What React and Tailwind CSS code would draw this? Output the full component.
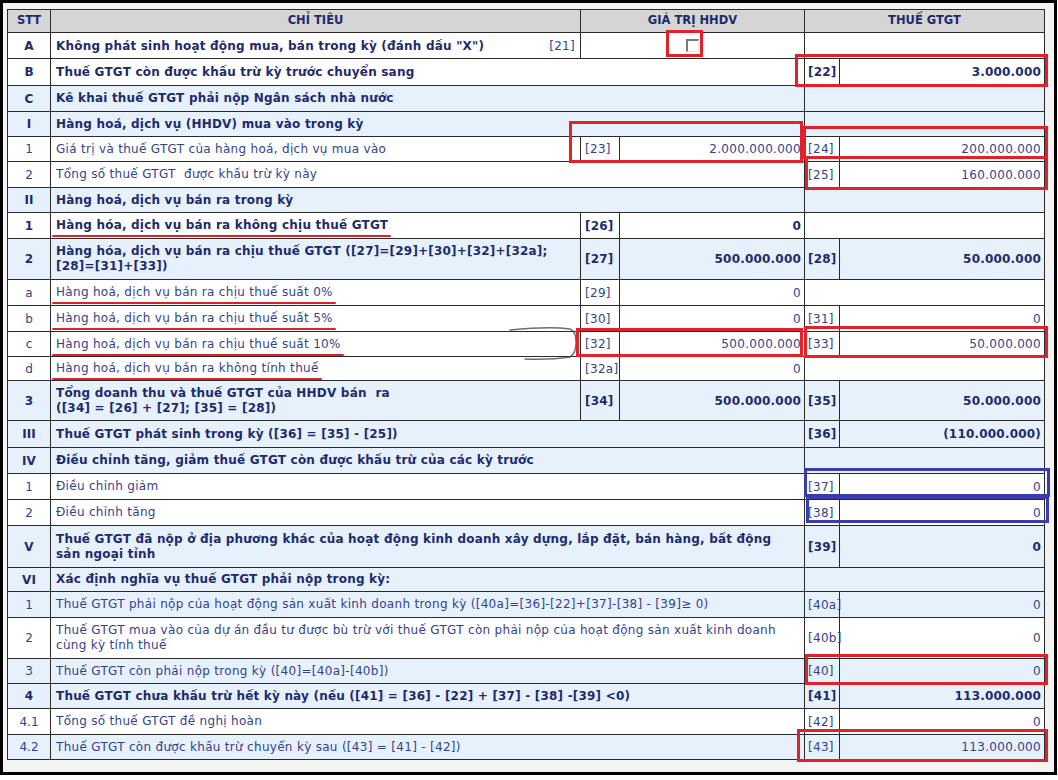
import React from "react";

const rows = [
  { stt: "B", text: "Thuế GTGT còn được khấu trừ kỳ trước chuyển sang", bold: true, h: 27, t: ["[22]", "3.000.000"] },
  { stt: "C", text: "Kê khai thuế GTGT phải nộp Ngân sách nhà nước", bold: true, blue: true, h: 26, t: null },
  { stt: "I", text: "Hàng hoá, dịch vụ (HHDV) mua vào trong kỳ", bold: true, blue: true, h: 25, t: null },
  { stt: "1", text: "Giá trị và thuế GTGT của hàng hoá, dịch vụ mua vào", h: 25, g: ["[23]", "2.000.000.000"], t: ["[24]", "200.000.000"] },
  { stt: "2", text: "Tổng số thuế GTGT\u00a0 được khấu trừ kỳ này", h: 26, t: ["[25]", "160.000.000"] },
  { stt: "II", text: "Hàng hoá, dịch vụ bán ra trong kỳ", bold: true, blue: true, h: 25, t: null },
  { stt: "1", text: "Hàng hóa, dịch vụ bán ra không chịu thuế GTGT", bold: true, h: 26, g: ["[26]", "0"], t: null, mark: true },
  { stt: "2", text: "Hàng hóa, dịch vụ bán ra chịu thuế GTGT ([27]=[29]+[30]+[32]+[32a];\n[28]=[31]+[33])", bold: true, blue: true, h: 41, g: ["[27]", "500.000.000"], t: ["[28]", "50.000.000"] },
  { stt: "a", text: "Hàng hoá, dịch vụ bán ra chịu thuế suất 0%", h: 26, g: ["[29]", "0"], t: null, mark: true },
  { stt: "b", text: "Hàng hoá, dịch vụ bán ra chịu thuế suất 5%", h: 26, g: ["[30]", "0"], t: ["[31]", "0"], mark: true },
  { stt: "c", text: "Hàng hoá, dịch vụ bán ra chịu thuế suất 10%", h: 25, g: ["[32]", "500.000.000"], t: ["[33]", "50.000.000"], mark: true },
  { stt: "d", text: "Hàng hoá, dịch vụ bán ra không tính thuế", h: 24, g: ["[32a]", "0"], t: null, mark: true },
  { stt: "3", text: "Tổng doanh thu và thuế GTGT của HHDV bán\u00a0 ra\n([34] = [26] + [27]; [35] = [28])", bold: true, blue: true, h: 40, g: ["[34]", "500.000.000"], t: ["[35]", "50.000.000"] },
  { stt: "III", text: "Thuế GTGT phát sinh trong kỳ ([36] = [35] - [25])", bold: true, blue: true, h: 27, t: ["[36]", "(110.000.000)"] },
  { stt: "IV", text: "Điều chỉnh tăng, giảm thuế GTGT còn được khấu trừ của các kỳ trước", bold: true, blue: true, h: 26, t: null },
  { stt: "1", text: "Điều chỉnh giảm", h: 26, t: ["[37]", "0"] },
  { stt: "2", text: "Điều chỉnh tăng", h: 26, t: ["[38]", "0"] },
  { stt: "V", text: "Thuế GTGT đã nộp ở địa phương khác của hoạt động kinh doanh xây dựng, lắp đặt, bán hàng, bất động\nsản ngoại tỉnh", bold: true, blue: true, h: 42, t: ["[39]", "0"] },
  { stt: "VI", text: "Xác định nghĩa vụ thuế GTGT phải nộp trong kỳ:", bold: true, blue: true, h: 24, t: null },
  { stt: "1", text: "Thuế GTGT phải nộp của hoạt động sản xuất kinh doanh trong kỳ ([40a]=[36]-[22]+[37]-[38] - [39]≥ 0)", blue: true, h: 26, t: ["[40a]", "0"] },
  { stt: "2", text: "Thuế GTGT mua vào của dự án đầu tư được bù trừ với thuế GTGT còn phải nộp của hoạt động sản xuất kinh doanh\ncùng kỳ tính thuế", h: 41, t: ["[40b]", "0"] },
  { stt: "3", text: "Thuế GTGT còn phải nộp trong kỳ ([40]=[40a]-[40b])", blue: true, h: 25, t: ["[40]", "0"] },
  { stt: "4", text: "Thuế GTGT chưa khấu trừ hết kỳ này (nếu ([41] = [36] - [22] + [37] - [38] -[39] <0)", bold: true, blue: true, h: 25, t: ["[41]", "113.000.000"] },
  { stt: "4.1", text: "Tổng số thuế GTGT đề nghị hoàn", h: 26, t: ["[42]", "0"] },
  { stt: "4.2", text: "Thuế GTGT còn được khấu trừ chuyển kỳ sau ([43] = [41] - [42])", blue: true, h: 25, t: ["[43]", "113.000.000"] },
];

const heightClass = {
  23: "h-[23px]",
  24: "h-[24px]",
  25: "h-[25px]",
  26: "h-[26px]",
  27: "h-[27px]",
  40: "h-[40px]",
  41: "h-[41px]",
  42: "h-[42px]",
};

const td = "border border-[#2a2a2a] p-0 align-middle";
const boldText = "font-bold text-[#1d2b6c] tracking-[0.2px]";
const normText = "font-normal text-[#34428c] tracking-[0.3px]";

function MultiLine({ text }) {
  const parts = text.split("\n");
  return parts.map((p, i) => (
    <React.Fragment key={i}>
      {p}
      {i < parts.length - 1 && <br />}
    </React.Fragment>
  ));
}

function Marked({ children }) {
  return (
    <span className="relative">
      {children}
      <span className="absolute left-[-4px] right-[-3px] bottom-[-5px] h-[2px] rounded-full bg-[#d9232b]" />
    </span>
  );
}

function Row({ r }) {
  const weight = r.bold ? boldText : normText;
  const bg = r.blue ? "bg-[#e6f1fc]" : "bg-white";
  const spanText = r.g ? 1 : 3;
  return (
    <tr className={`${heightClass[r.h]} ${bg}`}>
      <td className={`${td} text-center ${r.bold ? "font-bold text-[#1d2b6c]" : "text-[#34428c]"}`}>{r.stt}</td>
      <td colSpan={spanText} className={`${td} pl-[5px] pr-1 leading-[15px] whitespace-nowrap ${weight}`}>
        {r.mark ? <Marked>{r.text}</Marked> : <MultiLine text={r.text} />}
      </td>
      {r.g && (
        <>
          <td className={`${td} pl-[4px] ${weight}`}>{r.g[0]}</td>
          <td className={`${td} text-right pr-[3px] ${weight}`}>{r.g[1]}</td>
        </>
      )}
      {r.t ? (
        <>
          <td className={`${td} pl-[3px] ${weight}`}>{r.t[0]}</td>
          <td className={`${td} text-right pr-[3px] ${weight}`}>{r.t[1]}</td>
        </>
      ) : (
        <td colSpan={2} className={td}></td>
      )}
    </tr>
  );
}

function Box({ className }) {
  return <div className={`absolute pointer-events-none ${className}`} />;
}

export default function App() {
  return (
    <div className="relative w-[1058px] h-[780px] bg-white font-['DejaVu_Sans',Verdana,sans-serif] text-[12px]">
      <div className="w-[1057px] h-[775px] border-[3px] border-black bg-[#f3f3f3] pl-[4px] pt-[6px]">
        <table className="table-fixed border-collapse w-[1037px]">
          <colgroup>
            <col className="w-[43px]" />
            <col className="w-[530px]" />
            <col className="w-[39px]" />
            <col className="w-[185px]" />
            <col className="w-[35px]" />
            <col className="w-[205px]" />
          </colgroup>
          <thead>
            <tr className="h-[23px] bg-[#d5d5d5] text-[#1d2b6c] font-bold text-[11.5px]">
              <td className={`${td} text-center`}>STT</td>
              <td className={`${td} text-center`}>CHỈ TIÊU</td>
              <td colSpan={2} className={`${td} text-center`}>GIÁ TRỊ HHDV</td>
              <td colSpan={2} className={`${td} text-center`}>THUẾ GTGT</td>
            </tr>
          </thead>
          <tbody>
            <tr className="h-[26px] bg-white">
              <td className={`${td} text-center font-bold text-[#1d2b6c]`}>A</td>
              <td className={`${td} pl-[5px] pr-[5px]`}>
                <div className="flex items-center justify-between">
                  <span className={boldText}>Không phát sinh hoạt động mua, bán trong kỳ (đánh dấu "X")</span>
                  <span className={normText}>[21]</span>
                </div>
              </td>
              <td colSpan={2} className={td}>
                <div className="flex justify-center">
                  <div className="w-[13px] h-[13px] border-t-2 border-l-2 border-t-[#7a7a7a] border-l-[#7a7a7a] border-b border-r border-b-[#e8e8e8] border-r-[#e8e8e8] bg-white" />
                </div>
              </td>
              <td colSpan={2} className={td}></td>
            </tr>
            {rows.map((r, i) => (
              <Row key={i} r={r} />
            ))}
          </tbody>
        </table>
      </div>

      {/* hand-drawn stroke near [32] */}
      <svg className="absolute left-[500px] top-[320px] pointer-events-none" width="90" height="45" viewBox="0 0 90 45">
        <path d="M 10 10 Q 50 6 70 9 Q 76 11 76 22 Q 76 34 70 37 Q 50 40 25 39" fill="none" stroke="#4a4a4a" strokeWidth="1.5" strokeLinecap="round" opacity="0.8" />
      </svg>

      {/* annotation boxes */}
      <Box className="left-[666px] top-[30px] w-[37px] h-[27px] border-[3px] border-[#e2222b]" />
      <Box className="left-[795px] top-[54px] w-[253px] h-[33px] border-[3px] border-[#e2222b]" />
      <Box className="left-[569px] top-[121px] w-[234px] h-[42px] border-[3px] border-[#e2222b]" />
      <Box className="left-[803px] top-[126px] w-[245px] h-[33px] border-[3px] border-[#e2222b]" />
      <Box className="left-[805px] top-[156px] w-[243px] h-[34px] border-[3px] border-[#e2222b]" />
      <Box className="left-[576px] top-[328px] w-[227px] h-[29px] border-[3px] border-[#e2222b]" />
      <Box className="left-[804px] top-[326px] w-[244px] h-[32px] border-[3px] border-[#e2222b]" />
      <Box className="left-[804px] top-[468px] w-[246px] h-[29px] border-[3px] border-[#3b3bb0]" />
      <Box className="left-[806px] top-[496px] w-[243px] h-[27px] border-[3px] border-[#3b3bb0]" />
      <Box className="left-[805px] top-[654px] w-[243px] h-[31px] border-[3px] border-[#e2222b]" />
      <Box className="left-[797px] top-[729px] w-[251px] h-[33px] border-[3px] border-[#e2222b]" />
    </div>
  );
}
